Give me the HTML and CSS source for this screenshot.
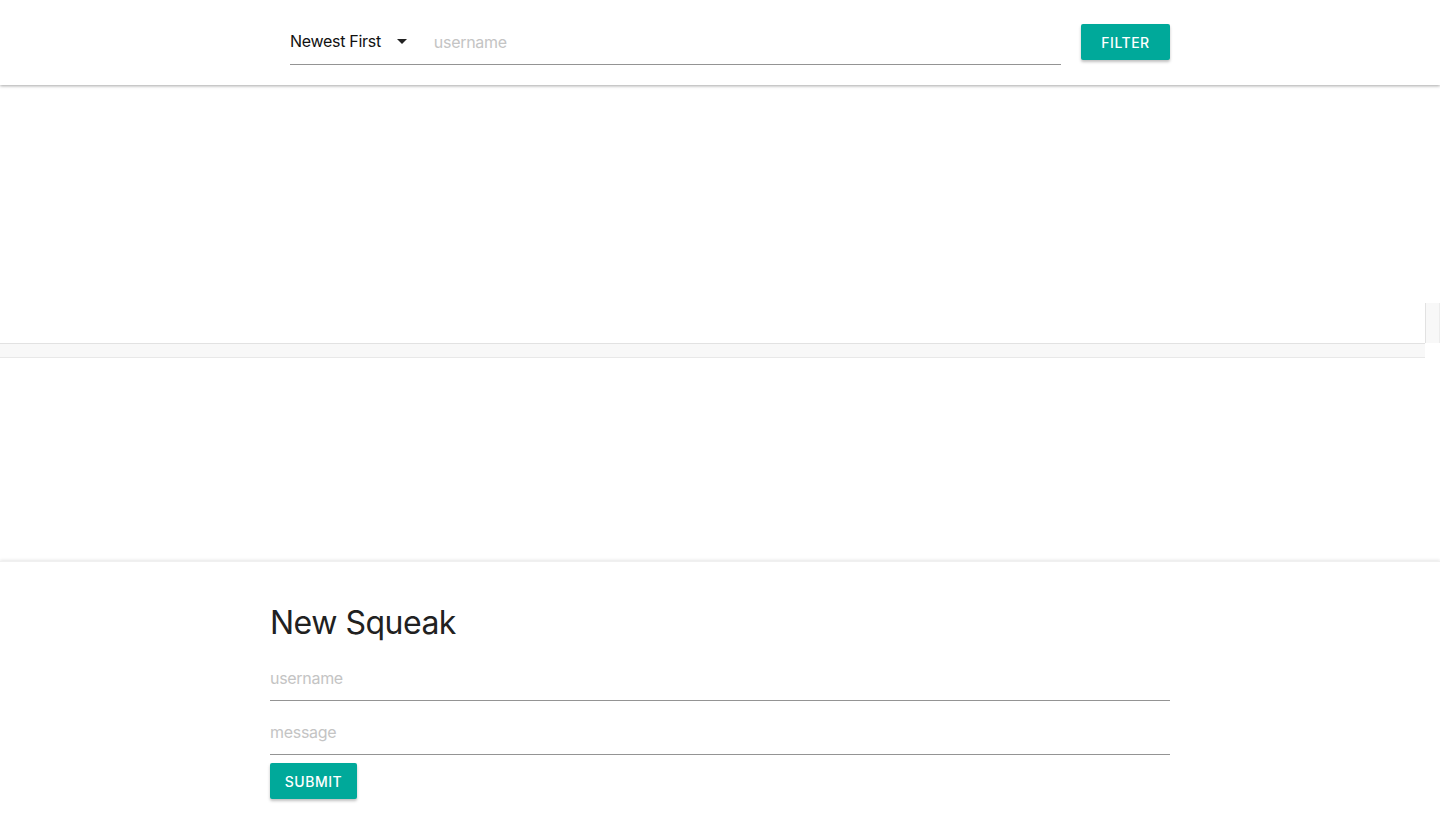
FILE: index.html
```html
<!DOCTYPE html>
<html>
<head>
<meta charset="utf-8">
<link rel="stylesheet" href="styles.css">
</head>
<body>
<header class="topbar">
  <div class="topbar-inner">
    <div class="filter-field">
      <div class="sort-select">
        <span class="sort-label">Newest First</span>
        <svg class="caret" width="10" height="5" viewBox="0 0 10 5"><path d="M0 0 L10 0 L5 5 Z" fill="#222"/></svg>
      </div>
      <input class="filter-input" type="text" placeholder="username">
    </div>
    <button class="btn btn-filter">FILTER</button>
  </div>
</header>
<main class="feed">
  <div class="feed-spacer"></div>
  <div class="scroll-row">
    <div class="scroll-fill"></div>
    <div class="vtrack"></div>
  </div>
  <div class="htrack"></div>
</main>
<section class="composer">
  <div class="composer-inner">
    <h1 class="composer-title">New Squeak</h1>
    <input class="field" type="text" placeholder="username">
    <input class="field" type="text" placeholder="message">
    <button class="btn btn-submit">SUBMIT</button>
  </div>
</section>
</body>
</html>
```

FILE: styles.css
```css
* { box-sizing: border-box; }
html, body { margin: 0; padding: 0; background: #fff; }
body {
  font-family: Inter, "Liberation Sans", Arial, sans-serif;
  color: #212121;
  width: 1440px;
  height: 816px;
  overflow: hidden;
}

.topbar {
  height: 85px;
  background: #fff;
  box-shadow: 0 1px 3px rgba(0,0,0,0.35);
  position: relative;
  z-index: 2;
}
.topbar-inner {
  width: 900px;
  margin: 0 auto;
  padding: 24px 0 0 20px;
  display: flex;
  align-items: flex-start;
  gap: 20px;
}
.filter-field {
  display: flex;
  align-items: center;
  width: 771px;
  height: 41px;
  border-bottom: 1px solid #949494;
  padding-bottom: 6px;
}
.sort-select {
  display: flex;
  align-items: center;
  gap: 16px;
  padding-right: 27px;
}
.sort-label {
  font-size: 16px;
  color: #111;
  letter-spacing: -0.3px;
}
.caret { margin-top: 1px; }
.filter-input {
  flex: 1;
  border: none;
  outline: none;
  font-family: inherit;
  font-size: 16px;
  letter-spacing: -0.3px;
  padding: 0;
  background: transparent;
  margin-top: 2px;
}
.filter-input::placeholder, .field::placeholder { color: #c4c4c4; }

.btn {
  background: #00a99a;
  color: #fff;
  border: none;
  border-radius: 2px;
  font-family: inherit;
  font-size: 14px;
  font-weight: 500;
  letter-spacing: 0.5px;
  height: 36px;
  box-shadow: 0 2px 3px rgba(0,0,0,0.25);
}
.btn-filter { width: 89px; }

.feed {
  height: 476px;
  display: flex;
  flex-direction: column;
}
.feed-spacer { height: 218px; }
.scroll-row { display: flex; height: 40px; }
.scroll-fill { flex: 1; }
.vtrack {
  width: 15px;
  background: #f8f8f8;
  border-left: 1px solid #e2e2e2;
  border-right: 1px solid #ececec;
}
.htrack {
  width: 1425px;
  height: 15px;
  background: #f8f8f8;
  border-top: 1px solid #e2e2e2;
  border-bottom: 1px solid #e8e8e8;
}

.composer {
  height: 255px;
  background: #fff;
  box-shadow: 0 -1px 3px rgba(0,0,0,0.1);
  border-top: 1px solid #f0f0f0;
}
.composer-inner {
  width: 900px;
  margin: 0 auto;
  display: flex;
  flex-direction: column;
  align-items: flex-start;
}
.composer-title {
  font-size: 32px;
  font-weight: 400;
  margin: 41px 0 0;
  line-height: 40px;
  color: #212121;
  letter-spacing: -0.5px;
}
.field {
  width: 900px;
  border: none;
  border-bottom: 1px solid #949494;
  outline: none;
  font-family: inherit;
  font-size: 16px;
  letter-spacing: -0.3px;
  padding: 0 0 8px;
  height: 37px;
  background: transparent;
}
.composer-title + .field { margin-top: 21px; }
.field + .field { margin-top: 17px; }
.btn-submit { width: 87px; margin-top: 8px; }
```
